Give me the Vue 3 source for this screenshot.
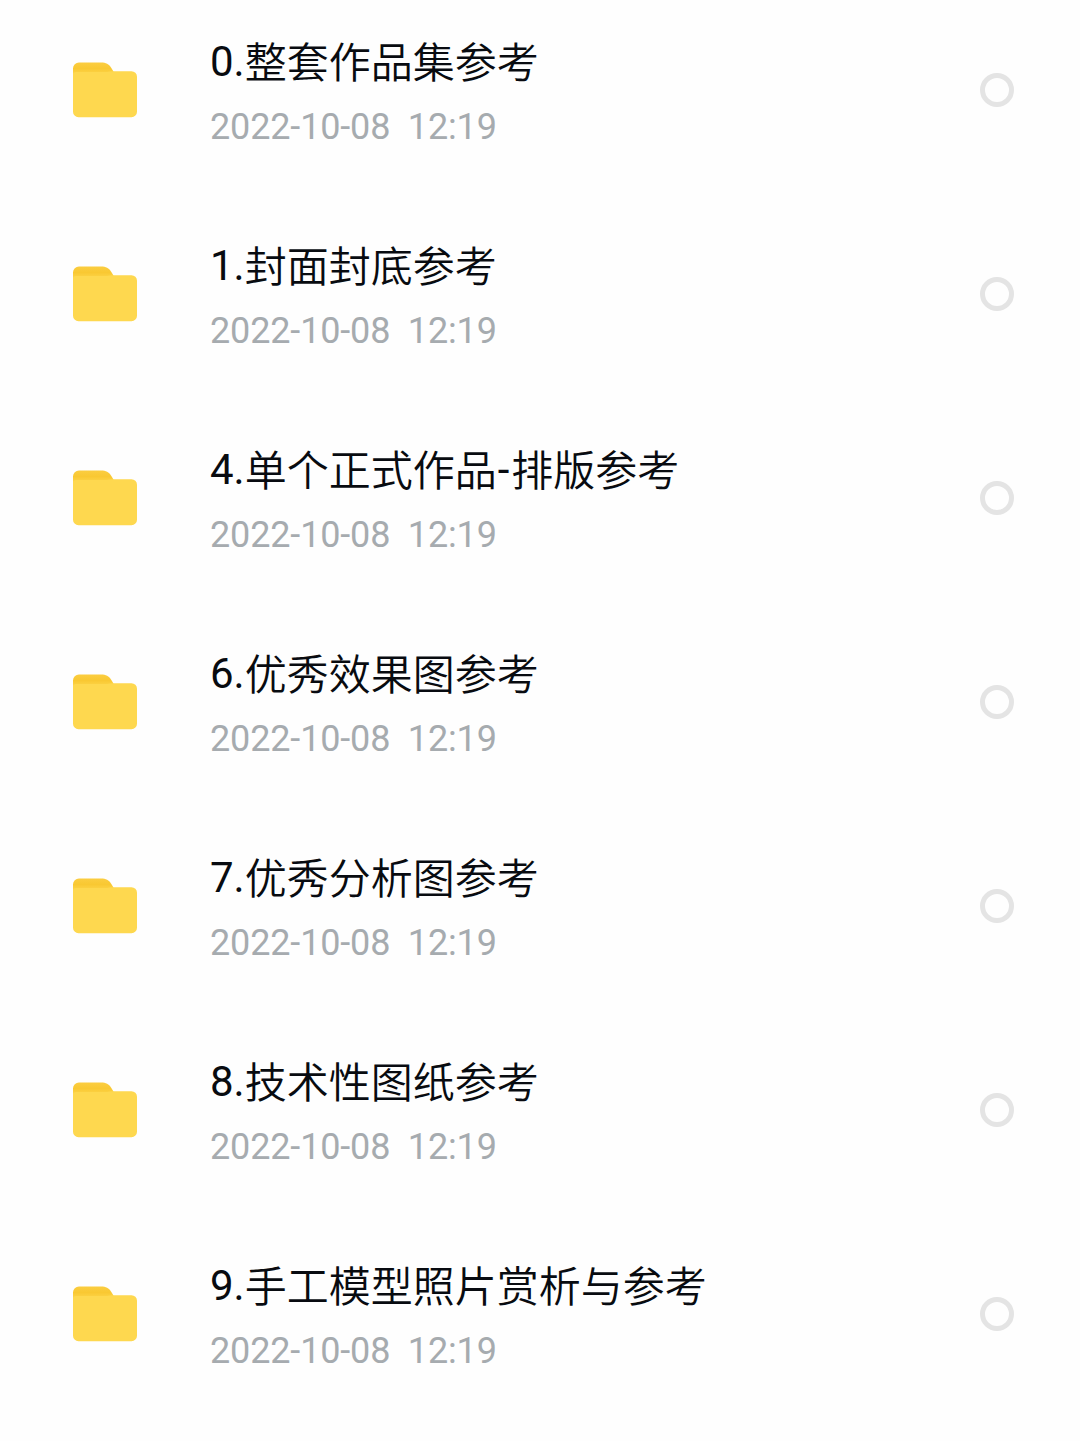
<template>
  <div class="file-list">
    <div v-for="item in files" :key="item.name" class="file-row" @click="toggle(item)">
      <svg class="folder" viewBox="0 0 64 56" width="64" height="56">
        <defs>
          <linearGradient id="tab" x1="0" y1="0" x2="0" y2="1">
            <stop offset="0" stop-color="#fbcd40" />
            <stop offset="0.5" stop-color="#f9c832" />
            <stop offset="1" stop-color="#fdd54a" />
          </linearGradient>
        </defs>
        <path d="M0 6.500a6 6 0 0 1 6-6h22c5 0 8 1.500 10 5l2.500 4v3H0z" fill="url(#tab)" />
        <path d="M0 12q0-2 3-2h29c3 0 4-.8 7-.8h19.500a5.500 5.500 0 0 1 5.500 5.500v35a5.500 5.500 0 0 1-5.500 5.500H5.500A5.500 5.500 0 0 1 0 49.700z" fill="#fed84f" />
      </svg>
      <div class="info">
        <div class="name">
          <span v-for="(part, i) in splitName(item.name)" :key="i" :class="{ latin: /[\d-]/.test(part), dash: part === '-' }">{{ part }}</span>
        </div>
        <div class="time">{{ item.time }}</div>
      </div>
      <div class="check" :class="{ checked: item.checked }"></div>
    </div>
  </div>
</template>

<script setup>
import { ref } from 'vue'

const time = '2022-10-08  12:19'

const files = ref([
  { name: '0.整套作品集参考', time, checked: false },
  { name: '1.封面封底参考', time, checked: false },
  { name: '4.单个正式作品-排版参考', time, checked: false },
  { name: '6.优秀效果图参考', time, checked: false },
  { name: '7.优秀分析图参考', time, checked: false },
  { name: '8.技术性图纸参考', time, checked: false },
  { name: '9.手工模型照片赏析与参考', time, checked: false }
])

// digits and dashes are set a bit heavier than the Chinese part
function splitName(name) {
  return name.split(/([\d.]+|-)/).filter(Boolean)
}

function toggle(item) {
  item.checked = !item.checked
}
</script>

<style>
body {
  background: #fefefe;
}
</style>

<style scoped>
.file-list {
  height: 1441px;
  overflow: hidden;
  font-family: Roboto, "Noto Sans CJK SC", sans-serif;
}

.file-row {
  display: flex;
  align-items: center;
  box-sizing: border-box;
  height: 204px;
  padding: 0 66px 24px 73px;
  cursor: pointer;
}

.folder {
  flex: none;
}

.info {
  flex: 1;
  margin-left: 73px;
  padding-top: 9px;
}

.name {
  height: 65px;
  line-height: 64px;
  font-size: 42px;
  font-weight: 350;
  color: #080b10;
  white-space: nowrap;
}

.name span {
  line-height: 1;
  vertical-align: -1.5px;
}

.name .latin {
  font-weight: 400;
  vertical-align: baseline;
}

.dash {
  margin: 0 2px 0 1px;
}

.time {
  height: 64px;
  line-height: 64px;
  font-size: 36px;
  letter-spacing: -0.15px;
  color: #a6abaf;
  white-space: pre;
}

.check {
  box-sizing: border-box;
  width: 34px;
  height: 34px;
  border: 5px solid #e4e4e4;
  border-radius: 50%;
}

.check.checked {
  border-color: #fed84f;
}
</style>
